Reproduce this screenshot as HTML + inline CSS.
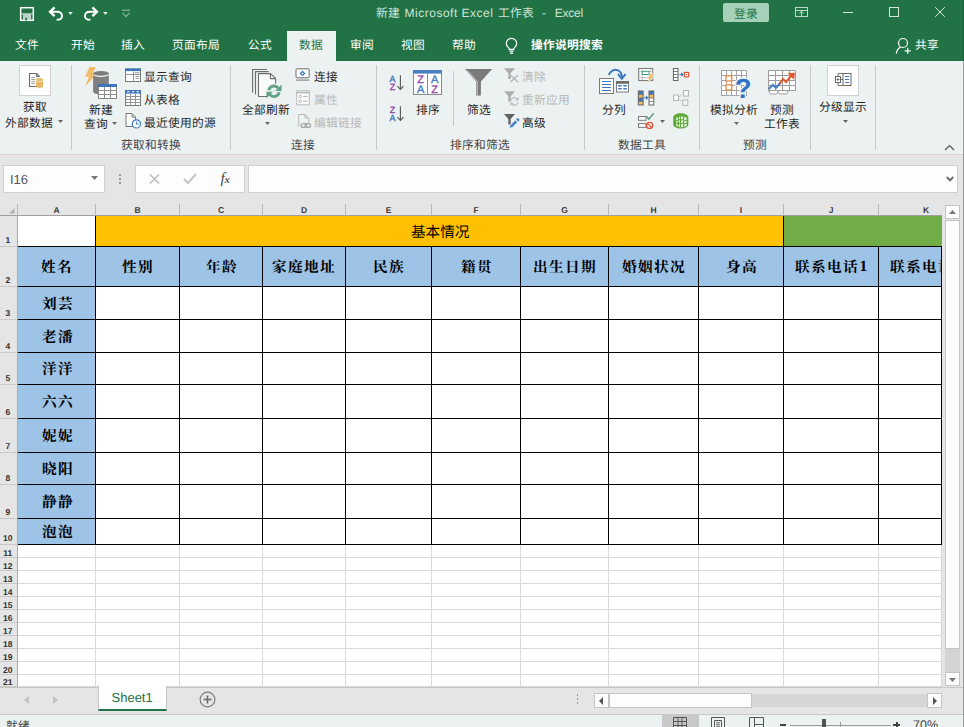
<!DOCTYPE html>
<html lang="zh-CN"><head><meta charset="utf-8"><title>Excel</title>
<style>
html,body{margin:0;padding:0;background:#e6e6e6;width:964px;height:727px;overflow:hidden;}
#app{width:964px;height:727px;position:relative;overflow:hidden;font-family:"Liberation Sans",sans-serif;text-rendering:geometricPrecision;-webkit-font-smoothing:antialiased;}
.a{position:absolute;overflow:visible;}
.t{font-family:"Liberation Sans",sans-serif;white-space:nowrap;}
.g{stroke:none;font-size:1000px;font-family:"Liberation Sans","Noto Sans CJK SC",sans-serif;}
.gb{stroke:none;font-size:1000px;font-weight:bold;font-family:"Liberation Sans","Noto Sans CJK SC",sans-serif;}
.gs{stroke:none;font-size:1000px;font-weight:bold;letter-spacing:67px;font-family:"Liberation Serif","Noto Serif CJK SC",serif;}
</style></head><body><div id="app">
<div class="a" style="left:0px;top:0px;width:964px;height:61px;background:#217346"></div>
<div class="a" style="left:963px;top:0px;width:1px;height:61px;background:#1c6039"></div>
<div class="a" style="left:287px;top:31px;width:49px;height:31px;background:#ecf2f2"></div>
<svg class="a" role="img" aria-label="文件" style="left:15px;top:38.2px;" width="24" height="12" viewBox="0 -880 2000 1000" preserveAspectRatio="none" fill="#fff"><text class="g" x="0" y="0">文件</text></svg>
<svg class="a" role="img" aria-label="开始" style="left:71px;top:38.2px;" width="24" height="12" viewBox="0 -880 2000 1000" preserveAspectRatio="none" fill="#fff"><text class="g" x="0" y="0">开始</text></svg>
<svg class="a" role="img" aria-label="插入" style="left:121px;top:38.2px;" width="24" height="12" viewBox="0 -880 2000 1000" preserveAspectRatio="none" fill="#fff"><text class="g" x="0" y="0">插入</text></svg>
<svg class="a" role="img" aria-label="页面布局" style="left:172px;top:38.2px;" width="48" height="12" viewBox="0 -880 4000 1000" preserveAspectRatio="none" fill="#fff"><text class="g" x="0" y="0">页面布局</text></svg>
<svg class="a" role="img" aria-label="公式" style="left:248px;top:38.2px;" width="24" height="12" viewBox="0 -880 2000 1000" preserveAspectRatio="none" fill="#fff"><text class="g" x="0" y="0">公式</text></svg>
<svg class="a" role="img" aria-label="审阅" style="left:350px;top:38.2px;" width="24" height="12" viewBox="0 -880 2000 1000" preserveAspectRatio="none" fill="#fff"><text class="g" x="0" y="0">审阅</text></svg>
<svg class="a" role="img" aria-label="视图" style="left:401px;top:38.2px;" width="24" height="12" viewBox="0 -880 2000 1000" preserveAspectRatio="none" fill="#fff"><text class="g" x="0" y="0">视图</text></svg>
<svg class="a" role="img" aria-label="帮助" style="left:452px;top:38.2px;" width="24" height="12" viewBox="0 -880 2000 1000" preserveAspectRatio="none" fill="#fff"><text class="g" x="0" y="0">帮助</text></svg>
<svg class="a" role="img" aria-label="数据" style="left:299px;top:38.2px;" width="24" height="12" viewBox="0 -880 2000 1000" preserveAspectRatio="none" fill="#217346"><text class="g" x="0" y="0">数据</text></svg>
<svg class="a" role="img" aria-label="操作说明搜索" style="left:531px;top:38.2px;" width="72" height="12" viewBox="0 -880 6000 1000" preserveAspectRatio="none" fill="#fff"><text class="gb" x="0" y="0">操作说明搜索</text></svg>
<svg class="a" role="img" aria-label="共享" style="left:915px;top:38.2px;" width="24" height="12" viewBox="0 -880 2000 1000" preserveAspectRatio="none" fill="#fff"><text class="g" x="0" y="0">共享</text></svg>
<svg class="a" role="img" aria-label="新建" style="left:376px;top:6.2px;" width="24" height="12" viewBox="0 -880 2000 1000" preserveAspectRatio="none" fill="#cfe3d8"><text class="g" x="0" y="0">新建</text></svg>
<div class="a t" style="left:404.6px;top:6px;font-size:12px;line-height:14px;color:#cfe3d8;letter-spacing:0.5px">Microsoft Excel</div>
<svg class="a" role="img" aria-label="工作表" style="left:497.6px;top:6.2px;" width="36" height="12" viewBox="0 -880 3000 1000" preserveAspectRatio="none" fill="#cfe3d8"><text class="g" x="0" y="0">工作表</text></svg>
<div class="a t" style="left:542px;top:6px;font-size:12px;line-height:14px;color:#cfe3d8;">-</div>
<div class="a t" style="left:554.8px;top:6px;font-size:12px;line-height:14px;color:#cfe3d8;letter-spacing:-0.25px">Excel</div>
<div class="a" style="left:723px;top:3px;width:46px;height:19px;background:#a5d1b9;border-radius:2px"></div>
<svg class="a" role="img" aria-label="登录" style="left:734px;top:6.5px;" width="24" height="12" viewBox="0 -880 2000 1000" preserveAspectRatio="none" fill="#217346"><text class="g" x="0" y="0">登录</text></svg>
<div class="a" style="left:0px;top:61px;width:964px;height:93px;background:#ecf2f2"></div>
<div class="a" style="left:0px;top:154px;width:964px;height:1px;background:#d6d6d6"></div>
<div class="a" style="left:0px;top:155px;width:964px;height:1px;background:#efe6e1"></div>
<div class="a" style="left:71px;top:65px;width:1px;height:85px;background:#c8cbc9"></div>
<div class="a" style="left:230px;top:65px;width:1px;height:85px;background:#c8cbc9"></div>
<div class="a" style="left:376px;top:65px;width:1px;height:85px;background:#c8cbc9"></div>
<div class="a" style="left:584px;top:65px;width:1px;height:85px;background:#c8cbc9"></div>
<div class="a" style="left:699px;top:65px;width:1px;height:85px;background:#c8cbc9"></div>
<div class="a" style="left:810px;top:65px;width:1px;height:85px;background:#c8cbc9"></div>
<div class="a" style="left:875px;top:65px;width:1px;height:85px;background:#c8cbc9"></div>
<div class="a" style="left:453px;top:71px;width:1px;height:55px;background:#c8cbc9"></div>
<div class="a" style="left:19px;top:65px;width:32px;height:31px;background:#fdfdfd;border:1px solid #d2cfd2;box-sizing:border-box"></div>
<svg class="a" role="img" aria-label="获取" style="left:23px;top:100px;" width="24" height="12" viewBox="0 -880 2000 1000" preserveAspectRatio="none" fill="#262626"><text class="g" x="0" y="0">获取</text></svg>
<svg class="a" role="img" aria-label="外部数据" style="left:5px;top:115.5px;" width="48" height="12" viewBox="0 -880 4000 1000" preserveAspectRatio="none" fill="#262626"><text class="g" x="0" y="0">外部数据</text></svg>
<svg class="a" role="img" aria-label="新建" style="left:89px;top:103px;" width="24" height="12" viewBox="0 -880 2000 1000" preserveAspectRatio="none" fill="#262626"><text class="g" x="0" y="0">新建</text></svg>
<svg class="a" role="img" aria-label="查询" style="left:84px;top:117.3px;" width="24" height="12" viewBox="0 -880 2000 1000" preserveAspectRatio="none" fill="#262626"><text class="g" x="0" y="0">查询</text></svg>
<svg class="a" role="img" aria-label="显示查询" style="left:144px;top:69.5px;" width="48" height="12" viewBox="0 -880 4000 1000" preserveAspectRatio="none" fill="#262626"><text class="g" x="0" y="0">显示查询</text></svg>
<svg class="a" role="img" aria-label="从表格" style="left:144px;top:92.6px;" width="36" height="12" viewBox="0 -880 3000 1000" preserveAspectRatio="none" fill="#262626"><text class="g" x="0" y="0">从表格</text></svg>
<svg class="a" role="img" aria-label="最近使用的源" style="left:144px;top:115.5px;" width="72" height="12" viewBox="0 -880 6000 1000" preserveAspectRatio="none" fill="#262626"><text class="g" x="0" y="0">最近使用的源</text></svg>
<svg class="a" role="img" aria-label="获取和转换" style="left:121px;top:138.2px;" width="60" height="12" viewBox="0 -880 5000 1000" preserveAspectRatio="none" fill="#444"><text class="g" x="0" y="0">获取和转换</text></svg>
<svg class="a" role="img" aria-label="全部刷新" style="left:241.5px;top:102.7px;" width="48" height="12" viewBox="0 -880 4000 1000" preserveAspectRatio="none" fill="#262626"><text class="g" x="0" y="0">全部刷新</text></svg>
<svg class="a" role="img" aria-label="连接" style="left:314px;top:69.5px;" width="24" height="12" viewBox="0 -880 2000 1000" preserveAspectRatio="none" fill="#262626"><text class="g" x="0" y="0">连接</text></svg>
<svg class="a" role="img" aria-label="属性" style="left:314px;top:92.6px;" width="24" height="12" viewBox="0 -880 2000 1000" preserveAspectRatio="none" fill="#b8b8b8"><text class="g" x="0" y="0">属性</text></svg>
<svg class="a" role="img" aria-label="编辑链接" style="left:314px;top:115.5px;" width="48" height="12" viewBox="0 -880 4000 1000" preserveAspectRatio="none" fill="#b8b8b8"><text class="g" x="0" y="0">编辑链接</text></svg>
<svg class="a" role="img" aria-label="连接" style="left:291px;top:138.2px;" width="24" height="12" viewBox="0 -880 2000 1000" preserveAspectRatio="none" fill="#444"><text class="g" x="0" y="0">连接</text></svg>
<svg class="a" role="img" aria-label="排序" style="left:416px;top:102.7px;" width="24" height="12" viewBox="0 -880 2000 1000" preserveAspectRatio="none" fill="#262626"><text class="g" x="0" y="0">排序</text></svg>
<svg class="a" role="img" aria-label="筛选" style="left:467px;top:102.7px;" width="24" height="12" viewBox="0 -880 2000 1000" preserveAspectRatio="none" fill="#262626"><text class="g" x="0" y="0">筛选</text></svg>
<svg class="a" role="img" aria-label="清除" style="left:522px;top:69.5px;" width="24" height="12" viewBox="0 -880 2000 1000" preserveAspectRatio="none" fill="#b8b8b8"><text class="g" x="0" y="0">清除</text></svg>
<svg class="a" role="img" aria-label="重新应用" style="left:522px;top:92.6px;" width="48" height="12" viewBox="0 -880 4000 1000" preserveAspectRatio="none" fill="#b8b8b8"><text class="g" x="0" y="0">重新应用</text></svg>
<svg class="a" role="img" aria-label="高级" style="left:522px;top:115.5px;" width="24" height="12" viewBox="0 -880 2000 1000" preserveAspectRatio="none" fill="#262626"><text class="g" x="0" y="0">高级</text></svg>
<svg class="a" role="img" aria-label="排序和筛选" style="left:450px;top:138.2px;" width="60" height="12" viewBox="0 -880 5000 1000" preserveAspectRatio="none" fill="#444"><text class="g" x="0" y="0">排序和筛选</text></svg>
<svg class="a" role="img" aria-label="分列" style="left:602px;top:102.7px;" width="24" height="12" viewBox="0 -880 2000 1000" preserveAspectRatio="none" fill="#262626"><text class="g" x="0" y="0">分列</text></svg>
<svg class="a" role="img" aria-label="数据工具" style="left:618px;top:138.2px;" width="48" height="12" viewBox="0 -880 4000 1000" preserveAspectRatio="none" fill="#444"><text class="g" x="0" y="0">数据工具</text></svg>
<svg class="a" role="img" aria-label="模拟分析" style="left:710px;top:102.7px;" width="48" height="12" viewBox="0 -880 4000 1000" preserveAspectRatio="none" fill="#262626"><text class="g" x="0" y="0">模拟分析</text></svg>
<svg class="a" role="img" aria-label="预测" style="left:770px;top:102.7px;" width="24" height="12" viewBox="0 -880 2000 1000" preserveAspectRatio="none" fill="#262626"><text class="g" x="0" y="0">预测</text></svg>
<svg class="a" role="img" aria-label="工作表" style="left:764px;top:117.3px;" width="36" height="12" viewBox="0 -880 3000 1000" preserveAspectRatio="none" fill="#262626"><text class="g" x="0" y="0">工作表</text></svg>
<svg class="a" role="img" aria-label="预测" style="left:743px;top:138.2px;" width="24" height="12" viewBox="0 -880 2000 1000" preserveAspectRatio="none" fill="#444"><text class="g" x="0" y="0">预测</text></svg>
<div class="a" style="left:827px;top:65px;width:32px;height:31px;background:#fdfdfd;border:1px solid #d2cfd2;box-sizing:border-box"></div>
<svg class="a" role="img" aria-label="分级显示" style="left:819px;top:100px;" width="48" height="12" viewBox="0 -880 4000 1000" preserveAspectRatio="none" fill="#262626"><text class="g" x="0" y="0">分级显示</text></svg>
<svg class="a" style="left:58.3px;top:120px;" width="5" height="3" viewBox="0 0 5 3"><path d="M0 0H5 L2.5 3Z" fill="#666"/></svg>
<svg class="a" style="left:111.7px;top:121.9px;" width="5" height="3" viewBox="0 0 5 3"><path d="M0 0H5 L2.5 3Z" fill="#666"/></svg>
<svg class="a" style="left:265px;top:122px;" width="5" height="3" viewBox="0 0 5 3"><path d="M0 0H5 L2.5 3Z" fill="#666"/></svg>
<svg class="a" style="left:660px;top:119.8px;" width="5" height="3" viewBox="0 0 5 3"><path d="M0 0H5 L2.5 3Z" fill="#666"/></svg>
<svg class="a" style="left:734.1px;top:122px;" width="5" height="3" viewBox="0 0 5 3"><path d="M0 0H5 L2.5 3Z" fill="#666"/></svg>
<svg class="a" style="left:842.9px;top:119.7px;" width="5" height="3" viewBox="0 0 5 3"><path d="M0 0H5 L2.5 3Z" fill="#666"/></svg>
<svg class="a" style="left:944px;top:144px;" width="11" height="7" viewBox="0 0 11 7"><path d="M1 6 L5.5 1.5 L10 6" fill="none" stroke="#555" stroke-width="1.2"/></svg>
<div class="a" style="left:0px;top:156px;width:964px;height:47px;background:#e5e5e5"></div>
<div class="a" style="left:3px;top:165px;width:102px;height:28px;background:#fdfdfd;border:1px solid #d0d0d0;box-sizing:border-box"></div>
<div class="a t" style="left:10px;top:172px;font-size:13px;line-height:16px;color:#555;">I16</div>
<svg class="a" style="left:90.5px;top:175.5px;" width="7" height="4" viewBox="0 0 7 4"><path d="M0 0H7 L3.5 4Z" fill="#777"/></svg>
<div class="a" style="left:119.3px;top:174.3px;width:1.7px;height:1.7px;background:#9c9c9c"></div>
<div class="a" style="left:119.3px;top:178.3px;width:1.7px;height:1.7px;background:#9c9c9c"></div>
<div class="a" style="left:119.3px;top:182.3px;width:1.7px;height:1.7px;background:#9c9c9c"></div>
<div class="a" style="left:135px;top:165px;width:110px;height:28px;background:#fdfdfd;border:1px solid #d0d0d0;box-sizing:border-box"></div>
<svg class="a" style="left:149px;top:174px;" width="11" height="10" viewBox="0 0 11 10"><path d="M1 0.5 L10 9.5 M10 0.5 L1 9.5" stroke="#c0c0c0" stroke-width="1.7" fill="none"/></svg>
<svg class="a" style="left:183px;top:173px;" width="14" height="11" viewBox="0 0 14 11"><path d="M1 6 L5 10 L13 1" stroke="#c6c4c6" stroke-width="2.2" fill="none"/></svg>
<div class="a" style="left:220.6px;top:169.6px;font-family:'Liberation Serif',serif;font-style:italic;font-size:15.5px;line-height:18px;color:#4c4c4c;white-space:nowrap">f<span style="font-size:10.5px;font-weight:bold;margin-left:-0.3px">x</span></div>
<div class="a" style="left:248px;top:165px;width:710px;height:28px;background:#fdfdfd;border:1px solid #d0d0d0;box-sizing:border-box"></div>
<svg class="a" style="left:945.5px;top:175.5px;" width="8" height="6" viewBox="0 0 8 6"><path d="M0.8 1 L4 4.4 L7.2 1" fill="none" stroke="#6a6a6a" stroke-width="1.9"/></svg>
<div class="a" style="left:0px;top:203px;width:964px;height:13px;background:#e5e5e5"></div>
<div class="a" style="left:18px;top:216px;width:924px;height:471px;background:#fff"></div>
<div class="a" style="left:0px;top:216px;width:18px;height:471px;background:#e5e5e5"></div>
<div class="a t" style="left:46.5px;width:20px;text-align:center;top:204.5px;font-size:8.5px;line-height:10px;color:#3a3a3a;font-weight:bold">A</div>
<div class="a t" style="left:127.5px;width:20px;text-align:center;top:204.5px;font-size:8.5px;line-height:10px;color:#3a3a3a;font-weight:bold">B</div>
<div class="a t" style="left:211px;width:20px;text-align:center;top:204.5px;font-size:8.5px;line-height:10px;color:#3a3a3a;font-weight:bold">C</div>
<div class="a t" style="left:294px;width:20px;text-align:center;top:204.5px;font-size:8.5px;line-height:10px;color:#3a3a3a;font-weight:bold">D</div>
<div class="a t" style="left:378.5px;width:20px;text-align:center;top:204.5px;font-size:8.5px;line-height:10px;color:#3a3a3a;font-weight:bold">E</div>
<div class="a t" style="left:466px;width:20px;text-align:center;top:204.5px;font-size:8.5px;line-height:10px;color:#3a3a3a;font-weight:bold">F</div>
<div class="a t" style="left:554.5px;width:20px;text-align:center;top:204.5px;font-size:8.5px;line-height:10px;color:#3a3a3a;font-weight:bold">G</div>
<div class="a t" style="left:643.5px;width:20px;text-align:center;top:204.5px;font-size:8.5px;line-height:10px;color:#3a3a3a;font-weight:bold">H</div>
<div class="a t" style="left:731px;width:20px;text-align:center;top:204.5px;font-size:8.5px;line-height:10px;color:#3a3a3a;font-weight:bold">I</div>
<div class="a t" style="left:821px;width:20px;text-align:center;top:204.5px;font-size:8.5px;line-height:10px;color:#3a3a3a;font-weight:bold">J</div>
<div class="a t" style="left:916px;width:20px;text-align:center;top:204.5px;font-size:8.5px;line-height:10px;color:#3a3a3a;font-weight:bold">K</div>
<div class="a" style="left:17px;top:204px;width:1px;height:12px;background:#b9b9b9"></div>
<div class="a" style="left:95px;top:204px;width:1px;height:12px;background:#b9b9b9"></div>
<div class="a" style="left:179px;top:204px;width:1px;height:12px;background:#b9b9b9"></div>
<div class="a" style="left:262px;top:204px;width:1px;height:12px;background:#b9b9b9"></div>
<div class="a" style="left:345px;top:204px;width:1px;height:12px;background:#b9b9b9"></div>
<div class="a" style="left:431px;top:204px;width:1px;height:12px;background:#b9b9b9"></div>
<div class="a" style="left:520px;top:204px;width:1px;height:12px;background:#b9b9b9"></div>
<div class="a" style="left:608px;top:204px;width:1px;height:12px;background:#b9b9b9"></div>
<div class="a" style="left:698px;top:204px;width:1px;height:12px;background:#b9b9b9"></div>
<div class="a" style="left:783px;top:204px;width:1px;height:12px;background:#b9b9b9"></div>
<div class="a" style="left:878px;top:204px;width:1px;height:12px;background:#b9b9b9"></div>
<div class="a" style="left:0px;top:215px;width:942px;height:1px;background:#9f9f9f"></div>
<svg class="a" style="left:9px;top:208px;" width="5.5" height="5.5" viewBox="0 0 5.5 5.5"><path d="M5.5 0V5.5H0Z" fill="#b2b2b2"/></svg>
<div class="a t" style="left:-1.2px;width:18px;text-align:center;top:234.7px;font-size:8.5px;line-height:10px;color:#303030;font-weight:bold">1</div>
<div class="a" style="left:0px;top:246px;width:18px;height:1px;background:#c9c9c9"></div>
<div class="a t" style="left:-1.2px;width:18px;text-align:center;top:274.7px;font-size:8.5px;line-height:10px;color:#303030;font-weight:bold">2</div>
<div class="a" style="left:0px;top:286px;width:18px;height:1px;background:#c9c9c9"></div>
<div class="a t" style="left:-1.2px;width:18px;text-align:center;top:307.7px;font-size:8.5px;line-height:10px;color:#303030;font-weight:bold">3</div>
<div class="a" style="left:0px;top:319px;width:18px;height:1px;background:#c9c9c9"></div>
<div class="a t" style="left:-1.2px;width:18px;text-align:center;top:340.7px;font-size:8.5px;line-height:10px;color:#303030;font-weight:bold">4</div>
<div class="a" style="left:0px;top:352px;width:18px;height:1px;background:#c9c9c9"></div>
<div class="a t" style="left:-1.2px;width:18px;text-align:center;top:372.7px;font-size:8.5px;line-height:10px;color:#303030;font-weight:bold">5</div>
<div class="a" style="left:0px;top:384px;width:18px;height:1px;background:#c9c9c9"></div>
<div class="a t" style="left:-1.2px;width:18px;text-align:center;top:406.7px;font-size:8.5px;line-height:10px;color:#303030;font-weight:bold">6</div>
<div class="a" style="left:0px;top:418px;width:18px;height:1px;background:#c9c9c9"></div>
<div class="a t" style="left:-1.2px;width:18px;text-align:center;top:440.7px;font-size:8.5px;line-height:10px;color:#303030;font-weight:bold">7</div>
<div class="a" style="left:0px;top:452px;width:18px;height:1px;background:#c9c9c9"></div>
<div class="a t" style="left:-1.2px;width:18px;text-align:center;top:472.7px;font-size:8.5px;line-height:10px;color:#303030;font-weight:bold">8</div>
<div class="a" style="left:0px;top:484px;width:18px;height:1px;background:#c9c9c9"></div>
<div class="a t" style="left:-1.2px;width:18px;text-align:center;top:506.7px;font-size:8.5px;line-height:10px;color:#303030;font-weight:bold">9</div>
<div class="a" style="left:0px;top:518px;width:18px;height:1px;background:#c9c9c9"></div>
<div class="a t" style="left:-1.2px;width:18px;text-align:center;top:532.7px;font-size:8.5px;line-height:10px;color:#303030;font-weight:bold">10</div>
<div class="a" style="left:0px;top:544px;width:18px;height:1px;background:#c9c9c9"></div>
<div class="a t" style="left:-1.2px;width:18px;text-align:center;top:547.8px;font-size:8.5px;line-height:10px;color:#303030;font-weight:bold">11</div>
<div class="a" style="left:0px;top:557px;width:18px;height:1px;background:#c9c9c9"></div>
<div class="a t" style="left:-1.2px;width:18px;text-align:center;top:560.8px;font-size:8.5px;line-height:10px;color:#303030;font-weight:bold">12</div>
<div class="a" style="left:0px;top:570px;width:18px;height:1px;background:#c9c9c9"></div>
<div class="a t" style="left:-1.2px;width:18px;text-align:center;top:573.8px;font-size:8.5px;line-height:10px;color:#303030;font-weight:bold">13</div>
<div class="a" style="left:0px;top:583px;width:18px;height:1px;background:#c9c9c9"></div>
<div class="a t" style="left:-1.2px;width:18px;text-align:center;top:586.8px;font-size:8.5px;line-height:10px;color:#303030;font-weight:bold">14</div>
<div class="a" style="left:0px;top:596px;width:18px;height:1px;background:#c9c9c9"></div>
<div class="a t" style="left:-1.2px;width:18px;text-align:center;top:599.8px;font-size:8.5px;line-height:10px;color:#303030;font-weight:bold">15</div>
<div class="a" style="left:0px;top:609px;width:18px;height:1px;background:#c9c9c9"></div>
<div class="a t" style="left:-1.2px;width:18px;text-align:center;top:612.8px;font-size:8.5px;line-height:10px;color:#303030;font-weight:bold">16</div>
<div class="a" style="left:0px;top:622px;width:18px;height:1px;background:#c9c9c9"></div>
<div class="a t" style="left:-1.2px;width:18px;text-align:center;top:625.8px;font-size:8.5px;line-height:10px;color:#303030;font-weight:bold">17</div>
<div class="a" style="left:0px;top:635px;width:18px;height:1px;background:#c9c9c9"></div>
<div class="a t" style="left:-1.2px;width:18px;text-align:center;top:638.8px;font-size:8.5px;line-height:10px;color:#303030;font-weight:bold">18</div>
<div class="a" style="left:0px;top:648px;width:18px;height:1px;background:#c9c9c9"></div>
<div class="a t" style="left:-1.2px;width:18px;text-align:center;top:651.8px;font-size:8.5px;line-height:10px;color:#303030;font-weight:bold">19</div>
<div class="a" style="left:0px;top:661px;width:18px;height:1px;background:#c9c9c9"></div>
<div class="a t" style="left:-1.2px;width:18px;text-align:center;top:664.8px;font-size:8.5px;line-height:10px;color:#303030;font-weight:bold">20</div>
<div class="a" style="left:0px;top:674px;width:18px;height:1px;background:#c9c9c9"></div>
<div class="a t" style="left:-1.2px;width:18px;text-align:center;top:676.8px;font-size:8.5px;line-height:10px;color:#303030;font-weight:bold">21</div>
<div class="a" style="left:0px;top:686px;width:18px;height:1px;background:#c9c9c9"></div>
<div class="a" style="left:17px;top:216px;width:1px;height:471px;background:#ababab"></div>
<div class="a" style="left:18px;top:557px;width:924px;height:1px;background:#d9d9d9"></div>
<div class="a" style="left:18px;top:570px;width:924px;height:1px;background:#d9d9d9"></div>
<div class="a" style="left:18px;top:583px;width:924px;height:1px;background:#d9d9d9"></div>
<div class="a" style="left:18px;top:596px;width:924px;height:1px;background:#d9d9d9"></div>
<div class="a" style="left:18px;top:609px;width:924px;height:1px;background:#d9d9d9"></div>
<div class="a" style="left:18px;top:622px;width:924px;height:1px;background:#d9d9d9"></div>
<div class="a" style="left:18px;top:635px;width:924px;height:1px;background:#d9d9d9"></div>
<div class="a" style="left:18px;top:648px;width:924px;height:1px;background:#d9d9d9"></div>
<div class="a" style="left:18px;top:661px;width:924px;height:1px;background:#d9d9d9"></div>
<div class="a" style="left:18px;top:674px;width:924px;height:1px;background:#d9d9d9"></div>
<div class="a" style="left:18px;top:686px;width:924px;height:1px;background:#d9d9d9"></div>
<div class="a" style="left:95px;top:545px;width:1px;height:142px;background:#d9d9d9"></div>
<div class="a" style="left:179px;top:545px;width:1px;height:142px;background:#d9d9d9"></div>
<div class="a" style="left:262px;top:545px;width:1px;height:142px;background:#d9d9d9"></div>
<div class="a" style="left:345px;top:545px;width:1px;height:142px;background:#d9d9d9"></div>
<div class="a" style="left:431px;top:545px;width:1px;height:142px;background:#d9d9d9"></div>
<div class="a" style="left:520px;top:545px;width:1px;height:142px;background:#d9d9d9"></div>
<div class="a" style="left:608px;top:545px;width:1px;height:142px;background:#d9d9d9"></div>
<div class="a" style="left:698px;top:545px;width:1px;height:142px;background:#d9d9d9"></div>
<div class="a" style="left:783px;top:545px;width:1px;height:142px;background:#d9d9d9"></div>
<div class="a" style="left:878px;top:545px;width:1px;height:142px;background:#d9d9d9"></div>
<div class="a" style="left:941px;top:545px;width:1px;height:142px;background:#d9d9d9"></div>
<div class="a" style="left:96px;top:216px;width:688px;height:31px;background:#ffc000"></div>
<div class="a" style="left:784px;top:216px;width:158px;height:31px;background:#70ad47"></div>
<div class="a" style="left:18px;top:247px;width:924px;height:40px;background:#9dc3e6"></div>
<div class="a" style="left:18px;top:287px;width:78px;height:258px;background:#9dc3e6"></div>
<div class="a" style="left:18px;top:246px;width:924px;height:1px;background:#000"></div>
<div class="a" style="left:18px;top:286px;width:924px;height:1px;background:#000"></div>
<div class="a" style="left:18px;top:319px;width:924px;height:1px;background:#000"></div>
<div class="a" style="left:18px;top:352px;width:924px;height:1px;background:#000"></div>
<div class="a" style="left:18px;top:384px;width:924px;height:1px;background:#000"></div>
<div class="a" style="left:18px;top:418px;width:924px;height:1px;background:#000"></div>
<div class="a" style="left:18px;top:452px;width:924px;height:1px;background:#000"></div>
<div class="a" style="left:18px;top:484px;width:924px;height:1px;background:#000"></div>
<div class="a" style="left:18px;top:518px;width:924px;height:1px;background:#000"></div>
<div class="a" style="left:18px;top:544px;width:924px;height:1px;background:#000"></div>
<div class="a" style="left:95px;top:216px;width:1px;height:329px;background:#000"></div>
<div class="a" style="left:179px;top:247px;width:1px;height:298px;background:#000"></div>
<div class="a" style="left:262px;top:247px;width:1px;height:298px;background:#000"></div>
<div class="a" style="left:345px;top:247px;width:1px;height:298px;background:#000"></div>
<div class="a" style="left:431px;top:247px;width:1px;height:298px;background:#000"></div>
<div class="a" style="left:520px;top:247px;width:1px;height:298px;background:#000"></div>
<div class="a" style="left:608px;top:247px;width:1px;height:298px;background:#000"></div>
<div class="a" style="left:698px;top:247px;width:1px;height:298px;background:#000"></div>
<div class="a" style="left:783px;top:216px;width:1px;height:329px;background:#000"></div>
<div class="a" style="left:878px;top:247px;width:1px;height:298px;background:#000"></div>
<div class="a" style="left:941px;top:247px;width:1px;height:298px;background:#000"></div>
<svg class="a" role="img" aria-label="基本情况" style="left:410.8px;top:223.5px;" width="58.4" height="14.6" viewBox="0 -880 4000 1000" preserveAspectRatio="none" fill="#000"><text class="g" x="0" y="0">基本情况</text></svg>
<svg class="a" role="img" aria-label="姓名" style="left:41px;top:259px;" width="31.01" height="15" viewBox="0 -880 2067 1000" preserveAspectRatio="none" fill="#000"><text class="gs" x="0" y="0">姓名</text></svg>
<svg class="a" role="img" aria-label="性别" style="left:122px;top:259px;" width="31.01" height="15" viewBox="0 -880 2067 1000" preserveAspectRatio="none" fill="#000"><text class="gs" x="0" y="0">性别</text></svg>
<svg class="a" role="img" aria-label="年龄" style="left:205.5px;top:259px;" width="31.01" height="15" viewBox="0 -880 2067 1000" preserveAspectRatio="none" fill="#000"><text class="gs" x="0" y="0">年龄</text></svg>
<svg class="a" role="img" aria-label="家庭地址" style="left:272.49px;top:259px;" width="63.01" height="15" viewBox="0 -880 4201 1000" preserveAspectRatio="none" fill="#000"><text class="gs" x="0" y="0">家庭地址</text></svg>
<svg class="a" role="img" aria-label="民族" style="left:373px;top:259px;" width="31.01" height="15" viewBox="0 -880 2067 1000" preserveAspectRatio="none" fill="#000"><text class="gs" x="0" y="0">民族</text></svg>
<svg class="a" role="img" aria-label="籍贯" style="left:460.5px;top:259px;" width="31.01" height="15" viewBox="0 -880 2067 1000" preserveAspectRatio="none" fill="#000"><text class="gs" x="0" y="0">籍贯</text></svg>
<svg class="a" role="img" aria-label="出生日期" style="left:532.99px;top:259px;" width="63.01" height="15" viewBox="0 -880 4201 1000" preserveAspectRatio="none" fill="#000"><text class="gs" x="0" y="0">出生日期</text></svg>
<svg class="a" role="img" aria-label="婚姻状况" style="left:621.99px;top:259px;" width="63.01" height="15" viewBox="0 -880 4201 1000" preserveAspectRatio="none" fill="#000"><text class="gs" x="0" y="0">婚姻状况</text></svg>
<svg class="a" role="img" aria-label="身高" style="left:725.5px;top:259px;" width="31.01" height="15" viewBox="0 -880 2067 1000" preserveAspectRatio="none" fill="#000"><text class="gs" x="0" y="0">身高</text></svg>
<svg class="a" role="img" aria-label="刘芸" style="left:41.5px;top:295.7px;" width="31.01" height="15" viewBox="0 -880 2067 1000" preserveAspectRatio="none" fill="#000"><text class="gs" x="0" y="0">刘芸</text></svg>
<svg class="a" role="img" aria-label="老潘" style="left:41.5px;top:328.7px;" width="31.01" height="15" viewBox="0 -880 2067 1000" preserveAspectRatio="none" fill="#000"><text class="gs" x="0" y="0">老潘</text></svg>
<svg class="a" role="img" aria-label="洋洋" style="left:41.5px;top:361.2px;" width="31.01" height="15" viewBox="0 -880 2067 1000" preserveAspectRatio="none" fill="#000"><text class="gs" x="0" y="0">洋洋</text></svg>
<svg class="a" role="img" aria-label="六六" style="left:41.5px;top:394.2px;" width="31.01" height="15" viewBox="0 -880 2067 1000" preserveAspectRatio="none" fill="#000"><text class="gs" x="0" y="0">六六</text></svg>
<svg class="a" role="img" aria-label="妮妮" style="left:41.5px;top:428.2px;" width="31.01" height="15" viewBox="0 -880 2067 1000" preserveAspectRatio="none" fill="#000"><text class="gs" x="0" y="0">妮妮</text></svg>
<svg class="a" role="img" aria-label="晓阳" style="left:41.5px;top:461.2px;" width="31.01" height="15" viewBox="0 -880 2067 1000" preserveAspectRatio="none" fill="#000"><text class="gs" x="0" y="0">晓阳</text></svg>
<svg class="a" role="img" aria-label="静静" style="left:41.5px;top:494.2px;" width="31.01" height="15" viewBox="0 -880 2067 1000" preserveAspectRatio="none" fill="#000"><text class="gs" x="0" y="0">静静</text></svg>
<svg class="a" role="img" aria-label="泡泡" style="left:41.5px;top:524.2px;" width="31.01" height="15" viewBox="0 -880 2067 1000" preserveAspectRatio="none" fill="#000"><text class="gs" x="0" y="0">泡泡</text></svg>
<svg class="a" role="img" aria-label="联系电话" style="left:795.3px;top:259px;" width="63.01" height="15" viewBox="0 -880 4201 1000" preserveAspectRatio="none" fill="#000"><text class="gs" x="0" y="0">联系电话</text></svg>
<div class="a" style="left:859.6px;top:257px;font-size:15.5px;line-height:20px;font-family:'Liberation Serif',serif;font-weight:bold;color:#000">1</div>
<svg class="a" role="img" aria-label="联系电话" style="left:890.3px;top:259px;clip-path:inset(-5px 12.8px -5px -5px);" width="63.01" height="15" viewBox="0 -880 4201 1000" preserveAspectRatio="none" fill="#000"><text class="gs" x="0" y="0">联系电话</text></svg>
<div class="a" style="left:942px;top:203px;width:22px;height:484px;background:#e5e5e5"></div>
<div class="a" style="left:945px;top:205px;width:15px;height:14px;background:#fdfdfd;border:1px solid #c4c4c4;box-sizing:border-box"></div>
<svg class="a" style="left:949px;top:210px;" width="7" height="4" viewBox="0 0 7 4"><path d="M0 4H7 L3.5 0Z" fill="#777"/></svg>
<div class="a" style="left:945px;top:220px;width:15px;height:429px;background:#fdfdfd;border:1px solid #c4c4c4;box-sizing:border-box"></div>
<div class="a" style="left:945px;top:649px;width:15px;height:23px;background:#d3d5d4"></div>
<div class="a" style="left:945px;top:672px;width:15px;height:14px;background:#fdfdfd;border:1px solid #c4c4c4;box-sizing:border-box"></div>
<svg class="a" style="left:949px;top:677.5px;" width="7" height="4" viewBox="0 0 7 4"><path d="M0 0H7 L3.5 4Z" fill="#777"/></svg>
<div class="a" style="left:0px;top:687px;width:964px;height:27px;background:#e5e5e5;border-top:1px solid #c6c6c6;box-sizing:border-box"></div>
<svg class="a" style="left:24px;top:696px;" width="5" height="8" viewBox="0 0 5 8"><path d="M5 0V8L0 4Z" fill="#c3c3c3"/></svg>
<svg class="a" style="left:53px;top:696px;" width="5" height="8" viewBox="0 0 5 8"><path d="M0 0V8L5 4Z" fill="#c3c3c3"/></svg>
<div class="a" style="left:98px;top:686px;width:69px;height:25px;background:#fff;border-left:1px solid #c6c6c6;border-right:1px solid #c6c6c6;border-bottom:2px solid #217346;box-sizing:border-box"></div>
<div class="a t" style="left:111.5px;top:690px;font-size:13px;line-height:16px;color:#217346;">Sheet1</div>
<svg class="a" style="left:199px;top:691px;" width="17" height="17" viewBox="0 0 17 17"><circle cx="8.5" cy="8.5" r="7.4" fill="none" stroke="#7a7a7a" stroke-width="1.1"/><path d="M4.5 8.5H12.5M8.5 4.5V12.5" stroke="#6a6a6a" stroke-width="1.6"/></svg>
<div class="a" style="left:576.8px;top:694px;width:1.7px;height:1.7px;background:#9c9c9c"></div>
<div class="a" style="left:576.8px;top:698px;width:1.7px;height:1.7px;background:#9c9c9c"></div>
<div class="a" style="left:576.8px;top:702px;width:1.7px;height:1.7px;background:#9c9c9c"></div>
<div class="a" style="left:594px;top:693px;width:15px;height:15px;background:#fdfdfd;border:1px solid #c4c4c4;box-sizing:border-box"></div>
<svg class="a" style="left:599px;top:696.5px;" width="4" height="8" viewBox="0 0 4 8"><path d="M4 0V8L0 4Z" fill="#555"/></svg>
<div class="a" style="left:609px;top:693px;width:143px;height:15px;background:#fdfdfd;border:1px solid #c4c4c4;box-sizing:border-box"></div>
<div class="a" style="left:752px;top:694px;width:175px;height:13px;background:#d5d5d5"></div>
<div class="a" style="left:927px;top:693px;width:15px;height:15px;background:#fdfdfd;border:1px solid #c4c4c4;box-sizing:border-box"></div>
<svg class="a" style="left:933px;top:696.5px;" width="4" height="8" viewBox="0 0 4 8"><path d="M0 0V8L4 4Z" fill="#555"/></svg>
<div class="a" style="left:0px;top:714px;width:964px;height:1px;background:#c8c8c8"></div>
<div class="a" style="left:0px;top:715px;width:964px;height:12px;background:#ecf2f2"></div>
<svg class="a" role="img" aria-label="就绪" style="left:6px;top:719px;" width="24" height="12" viewBox="0 -880 2000 1000" preserveAspectRatio="none" fill="#444"><text class="g" x="0" y="0">就绪</text></svg>
<div class="a" style="left:662px;top:715px;width:37px;height:12px;background:#c8c8c8"></div>
<svg class="a" style="left:673px;top:717.2px;" width="14" height="11" viewBox="0 0 14 11"><path d="M0.5 0.5H13.5V11H0.5ZM0.5 4.5H13.5M0.5 8.5H13.5M5 0.5V11M9 0.5V11" fill="none" stroke="#555" stroke-width="1"/></svg>
<svg class="a" style="left:711px;top:717.2px;" width="14" height="11" viewBox="0 0 14 11"><path d="M0.5 0.5H13.5V11H0.5ZM3.5 3.5H10.5V11H3.5ZM5.2 5.8H8.8M5.2 7.8H8.8M5.2 9.8H8.8" fill="none" stroke="#555" stroke-width="1"/></svg>
<svg class="a" style="left:749px;top:717.2px;" width="15" height="11" viewBox="0 0 15 11"><path d="M0.5 0.5H14.5V11H0.5ZM5.5 0.5V7.5H14.5M5.5 7.5V11" fill="none" stroke="#555" stroke-width="1"/></svg>
<div class="a" style="left:780px;top:724.3px;width:6px;height:1.8px;background:#444"></div>
<div class="a" style="left:790px;top:725px;width:101px;height:1px;background:#9a9a9a"></div>
<div class="a" style="left:840px;top:722px;width:1px;height:5px;background:#9a9a9a"></div>
<div class="a" style="left:822px;top:719px;width:4px;height:8px;background:#555"></div>
<div class="a" style="left:893px;top:724.3px;width:7.4px;height:1.8px;background:#444"></div>
<div class="a" style="left:895.8px;top:721.5px;width:1.8px;height:6px;background:#444"></div>
<div class="a t" style="left:913px;top:718.3px;font-size:12.5px;line-height:15px;color:#444;">70%</div>
<div class="a" style="left:963px;top:61px;width:1px;height:666px;background:#9b9b9b"></div>
<svg class="a" style="left:0;top:0" width="964" height="727" viewBox="0 0 964 727"><g fill="none" stroke="#fff" stroke-width="1.5">
<rect x="20.7" y="7.7" width="12.6" height="12.6"/>
</g>
<path d="M21.4 13.3H32.6V14.6H31.1V20.3H23V14.6H21.4Z" fill="#f4f9f6" fill-opacity="0.72"/><path d="M25.2 17.9H27.1V20.4H25.2Z" fill="#217346"/>
<g fill="none" stroke="#fff" stroke-width="1.9" stroke-linejoin="miter">
<path d="M54.6 7.3 L50 11.7 L54.6 16.1" stroke-width="2.3"/><path d="M50.3 11.7 H56.8 C60.2 11.7 62 13.6 62 15.9 C62 18.3 60 19.7 56.6 19.7"/>
<path d="M92.4 7.3 L97 11.7 L92.4 16.1" stroke-width="2.3"/><path d="M96.7 11.7 H90.2 C86.8 11.7 85 13.6 85 15.9 C85 18.3 87 19.7 90.4 19.7"/>
</g>
<path d="M68.2 12H72.8L70.5 14.7Z M103.1 12H107.7L105.4 14.7Z" fill="#fff"/>
<g fill="none" stroke="#8fbaa3" stroke-width="1.1"><path d="M122 10.2H130"/><path d="M122.6 12.8L126 16.6L129.4 12.8"/></g>
<g fill="none" stroke="#d3e6db" stroke-width="1">
<g stroke="#bcd8c9"><rect x="795.5" y="7.5" width="12" height="9"/><path d="M795.5 10.5H807.5"/><path d="M801.5 16.5V11.2M799.3 13.4L801.5 11.2L803.7 13.4"/></g>
<path d="M843 12.5H853"/>
<rect x="889.5" y="7.5" width="9" height="9"/>
<path d="M935.2 7.2L944.8 16.8M944.8 7.2L935.2 16.8"/>
</g>
<g fill="none" stroke="#fff" stroke-width="1.2">
<path d="M509.3 49.4 C509.3 47.4 506.3 46.6 506.3 43.4 C506.3 40.6 508.6 38.4 511.5 38.4 C514.4 38.4 516.7 40.6 516.7 43.4 C516.7 46.6 513.7 47.4 513.7 49.4 Z"/>
<path d="M509.4 51.2H513.6M510 53.2H513"/>
<circle cx="903" cy="43" r="4.5"/><path d="M896.3 53.8 C896.6 50.6 898.3 48.2 900.6 47.1"/><path d="M904.6 50.8H910.8M907.7 47.7V53.9"/>
</g>
<path d="M37 86.5H29.5V73.5H36.6L39.6 76.5" fill="none" stroke="#6e6e6e" stroke-width="1.1"/><path d="M36.6 73.5V76.5H39.6" fill="none" stroke="#6e6e6e" stroke-width="1.1"/>
<path d="M31.3 77.5H35M31.3 79.5H35M31.3 81.5H35M31.3 83.5H35" stroke="#9a9a9a" stroke-width="0.9" fill="none"/>
<path d="M36 79.6V86.3C36 87.3 37.6 88 39.5 88C41.4 88 43 87.3 43 86.3V79.6Z" fill="#e8b964"/><ellipse cx="39.5" cy="79.6" rx="3.5" ry="1.5" fill="#e8b964"/><path d="M36 80.6C36.8 81.7 42.2 81.7 43 80.6" fill="none" stroke="#fbf3e4" stroke-width="0.8"/>
<path d="M89.4 67L95.9 67L92.4 74.3L96.5 74.3L85.2 86.2L89 76.8L85 76.8Z" fill="#f0bc68"/>
<path d="M93.1 73.5V91.4C93.1 93 96.7 94.5 101 94.5C105.3 94.5 108.8 93 108.8 91.4V73.5Z" fill="#808080"/>
<ellipse cx="101" cy="74.6" rx="7.85" ry="2.5" fill="#f4f4f4"/><ellipse cx="101" cy="73.4" rx="7.85" ry="2.4" fill="#7d7d7d"/>
<rect x="98.5" y="84.5" width="18" height="14" fill="#fff" stroke="#868686"/><rect x="98" y="84" width="19" height="3" fill="#3f76b8"/>
<path d="M98.5 90.5H116.5M98.5 94.5H116.5M104.5 87V98.5M110.5 87V98.5" stroke="#8e8e8e" fill="none"/>
<rect x="125.5" y="69" width="15" height="12.5" fill="#fff" stroke="#7a7a7a"/><rect x="125" y="68.5" width="16" height="2.6" fill="#3f74bd"/>
<path d="M133.5 71.5V81.5M125.5 74.5H140.5M135.5 76.5H139M135.5 78.5H139M135 72.8H139.5" stroke="#8a8a8a" fill="none" stroke-width="0.9"/>
<rect x="125.5" y="90.5" width="15" height="15" fill="#fff" stroke="#7a7a7a"/><rect x="125" y="90" width="16" height="3.6" fill="#3f74bd"/>
<path d="M127 91.8H129.5M131.8 91.8H134.3M136.5 91.8H139" stroke="#fff" stroke-width="1"/>
<path d="M125.5 96.5H140.5M125.5 99.5H140.5M125.5 102.5H140.5M130.5 93.5V105.5M135.5 93.5V105.5" stroke="#8a8a8a" fill="none" stroke-width="0.9"/>
<path d="M126 113.5H132L135.5 117V126.5H126Z" fill="#fff" stroke="#7a7a7a"/><path d="M132 113.5V117H135.5" fill="none" stroke="#7a7a7a"/>
<circle cx="136.4" cy="123.9" r="4.1" fill="#fff" stroke="#3c78c3" stroke-width="1.2"/><path d="M136.4 121.6V124H138.6" fill="none" stroke="#3c78c3" stroke-width="1"/>
<g fill="none" stroke="#6e6e6e" stroke-width="1.1">
<path d="M252.6 92.5V69.5H266.8"/><path d="M255.5 94.5V71.6H268.8"/>
<path d="M258.5 73.6H270.4L275.6 78.6V96.5H258.5Z" fill="#fbfbfb"/><path d="M270.4 73.6V78.6H275.6"/>
</g>
<circle cx="274" cy="91.3" r="7.9" fill="#ecf2f2"/>
<g fill="none" stroke="#62a286" stroke-width="2.8"><path d="M268.9 90.3 A5.15 5.15 0 0 1 278.2 88.2"/><path d="M279.1 92.3 A5.15 5.15 0 0 1 269.8 94.4"/></g>
<path d="M281.6 84.4V90.9H275.2Z M266.4 98.2V91.7H272.8Z" fill="#62a286"/>
<rect x="296" y="68.8" width="13.2" height="9" rx="1.2" fill="#fff" stroke="#6a6a6a" stroke-width="1"/><path d="M296.3 80.1H308.9" stroke="#777" stroke-width="1" stroke-linecap="round"/>
<path d="M302.5 70.6L305.3 73.4L302.5 76.2L299.7 73.4Z" fill="#2f74c5"/><circle cx="302.5" cy="73.4" r="1" fill="#fff"/>
<rect x="296.7" y="90.8" width="12.6" height="14" fill="#fbfbfb" stroke="#b9b9b9"/><path d="M296.7 92.6H309.3" stroke="#b9b9b9" stroke-width="1.6"/>
<g stroke="#b9b9b9" fill="none"><circle cx="300.2" cy="96.6" r="1.2"/><circle cx="300.2" cy="101.2" r="1.2"/><path d="M303 96.6H307.5M303 101.2H307.5"/></g>
<path d="M298.7 114.5H305L308.7 118V124" fill="none" stroke="#b9b9b9"/><path d="M298.7 114.5V127" fill="none" stroke="#b9b9b9"/><path d="M305 114.5V118H308.7" fill="none" stroke="#b9b9b9"/>
<g fill="none" stroke="#aaa" stroke-width="1.4"><rect x="301.2" y="123.6" width="5.6" height="3.8" rx="1.9"/><rect x="305" y="123.6" width="5.6" height="3.8" rx="1.9"/></g>
<text x="392.6" y="81.9" font-family="Liberation Sans, sans-serif" font-size="9" fill="#3c78c3" stroke="#3c78c3" stroke-width="0.35" text-anchor="middle">A</text>
<text x="392.6" y="89.9" font-family="Liberation Sans, sans-serif" font-size="9" fill="#8f45a8" stroke="#8f45a8" stroke-width="0.35" text-anchor="middle">Z</text>
<text x="392.6" y="112.7" font-family="Liberation Sans, sans-serif" font-size="9" fill="#8f45a8" stroke="#8f45a8" stroke-width="0.35" text-anchor="middle">Z</text>
<text x="392.6" y="120.8" font-family="Liberation Sans, sans-serif" font-size="9" fill="#3c78c3" stroke="#3c78c3" stroke-width="0.35" text-anchor="middle">A</text>
<g fill="none" stroke="#555" stroke-width="1.1"><path d="M400.4 75.3V89.3M397.4 86.2L400.4 89.4L403.4 86.2"/><path d="M400.4 106.3V120.3M397.4 117.2L400.4 120.4L403.4 117.2"/></g>
<rect x="413.5" y="70.5" width="28" height="24" fill="#fff" stroke="#8a8a8a"/><rect x="413" y="70" width="29" height="3.6" fill="#4a7fc1"/><path d="M427.5 73.5V94.5" stroke="#8a8a8a"/>
<text x="420.6" y="82.7" font-family="Liberation Sans, sans-serif" font-size="11" fill="#8f45a8" stroke="#8f45a8" stroke-width="0.35" text-anchor="middle">Z</text>
<text x="420.6" y="92.7" font-family="Liberation Sans, sans-serif" font-size="11" fill="#3c78c3" stroke="#3c78c3" stroke-width="0.35" text-anchor="middle">A</text>
<text x="434.6" y="82.7" font-family="Liberation Sans, sans-serif" font-size="11" fill="#3c78c3" stroke="#3c78c3" stroke-width="0.35" text-anchor="middle">A</text>
<text x="434.6" y="92.7" font-family="Liberation Sans, sans-serif" font-size="11" fill="#8f45a8" stroke="#8f45a8" stroke-width="0.35" text-anchor="middle">Z</text>
<path d="M465 69H492.2L480.9 81.6V95.6H476.1V81.6Z" fill="#7b7b7b"/><path d="M467.4 70.6L477.2 81.4V95" fill="none" stroke="#f2f2f2" stroke-width="0.7"/>
<path d="M504 68.3H515L510.7 73.3V78.89999999999999H508.3V73.3Z" fill="#adadad"/>
<path d="M510.5 75.2L518 82M518 75.2L510.5 82" stroke="#b3b3b3" stroke-width="1.3" fill="none"/>
<path d="M504 91.2H515L510.7 96.2V101.8H508.3V96.2Z" fill="#adadad"/>
<g fill="none" stroke="#bdbdbd" stroke-width="1.3"><path d="M511 100.4A3.6 3.6 0 0 1 517.4 99"/><path d="M518 102.4A3.6 3.6 0 0 1 511.6 103.8"/></g><path d="M518.6 97V100.4H515.2Z M510.4 106V102.6H513.8Z" fill="#bdbdbd"/>
<path d="M504 114H515L510.7 119V124.6H508.3V119Z" fill="#646464"/>
<path d="M509.2 128.4L510 125.4L515.4 120L517.6 122.2L512.2 127.6Z" fill="#3f7fca" stroke="#ecf2f2" stroke-width="0.8"/><path d="M516.1 119.3L516.9 118.5C517.4 118 518 118 518.5 118.5L519.1 119.1C519.6 119.6 519.6 120.2 519.1 120.7L518.3 121.5Z" fill="#3f7fca"/>
<rect x="599.5" y="78.5" width="14" height="15" fill="#fff" stroke="#7a7a7a"/>
<path d="M602 81.5H611M602 84.5H611M602 87.5H611M602 90.5H611" stroke="#3c78c3" stroke-width="1" fill="none"/>
<rect x="616.5" y="81.5" width="12" height="10.5" fill="#fff" stroke="#7a7a7a"/><rect x="616" y="81" width="13" height="2.8" fill="#6c6c6c"/>
<path d="M618.2 85.7H621.7M623.3 85.7H626.8M618.2 88.8H621.7M623.3 88.8H626.8" stroke="#3c78c3" stroke-width="1.6" fill="none"/>
<path d="M608.8 74.8C610.2 70.8 614.4 68.9 618 70.4C620.6 71.5 621.8 73.8 621.8 77.2" fill="none" stroke="#3c78c3" stroke-width="2"/><path d="M618 74.2L621.8 78.6L625.6 74.2" fill="none" stroke="#3c78c3" stroke-width="2"/>
<rect x="638.7" y="68.5" width="14" height="12" fill="#fff" stroke="#7a7a7a" stroke-width="1.1"/>
<path d="M638.7 71.5H652.7M638.7 77.5H652.7M642 68.5V80.5M650 68.5V72" stroke="#bcbcbc" stroke-width="0.8" fill="none"/>
<rect x="642.3" y="71.3" width="6.8" height="3.2" fill="#fff" stroke="#3f9f7c" stroke-width="1"/>
<path d="M650.4 73.4L654.2 73.4L651.8 77.2L654 77.2L646.8 83.4L649.2 78.8L647.2 78.8Z" fill="#f0bc68" stroke="#ecf2f2" stroke-width="0.5"/>
<rect x="638.3" y="91.0" width="4.8" height="3.5" fill="#3c78c3"/>
<rect x="638.3" y="94.5" width="4.8" height="3.5" fill="#f2bb60"/>
<rect x="638.3" y="98.0" width="4.8" height="3.5" fill="#3c78c3"/>
<rect x="638.3" y="101.5" width="4.8" height="3.5" fill="#f2bb60"/>
<rect x="638.3" y="91" width="4.8" height="14" fill="none" stroke="#666" stroke-width="1"/>
<path d="M638.3 94.5H643.0999999999999M638.3 98H643.0999999999999M638.3 101.5H643.0999999999999" stroke="#666" stroke-width="0.7"/>
<rect x="649" y="91.0" width="4.8" height="3.5" fill="#3c78c3"/>
<rect x="649" y="94.5" width="4.8" height="3.5" fill="#f2bb60"/>
<rect x="649" y="98.0" width="4.8" height="3.5" fill="#fff"/>
<rect x="649" y="101.5" width="4.8" height="3.5" fill="#fff"/>
<rect x="649" y="91" width="4.8" height="14" fill="none" stroke="#666" stroke-width="1"/>
<path d="M649 94.5H653.8M649 98H653.8M649 101.5H653.8" stroke="#666" stroke-width="0.7"/>
<path d="M644.2 97.8H647.4M646 96.2L647.7 97.8L646 99.4" stroke="#3c78c3" stroke-width="1.1" fill="none"/>
<rect x="638.5" y="116.5" width="7.5" height="3.8" fill="#fff" stroke="#7a7a7a"/><rect x="638.5" y="123.6" width="7.5" height="3.8" fill="#fff" stroke="#7a7a7a"/>
<path d="M646.6 116.6L648.9 119.2L653.6 113.4" fill="none" stroke="#4a9d78" stroke-width="1.5"/>
<circle cx="649.6" cy="125.4" r="3" fill="#fff" stroke="#e04e2f" stroke-width="1.3"/><path d="M647.5 123.3L651.7 127.5" stroke="#e04e2f" stroke-width="1.2"/>
<rect x="673.4" y="68.5" width="4.6" height="12" fill="#fff" stroke="#666" stroke-width="1"/><path d="M673.4 71.5H678M673.4 74.5H678M673.4 77.5H678" stroke="#666" stroke-width="0.8"/>
<path d="M679.4 74.5H682.8M681.3 72.9L683 74.5L681.3 76.1" stroke="#3c78c3" stroke-width="1.1" fill="none"/>
<rect x="684.3" y="72.4" width="4.4" height="4.4" fill="#fff" stroke="#d9482b" stroke-width="1.1"/><rect x="685.9" y="74" width="1.2" height="1.2" fill="#d9482b"/>
<g fill="#f8f8f8" stroke="#b5b5b5" stroke-width="1"><rect x="673.5" y="95" width="5" height="5.6"/><rect x="683.6" y="90.5" width="5" height="5.6"/><rect x="682.8" y="100" width="5" height="5.4"/></g>
<path d="M678.5 97.4L683.6 93.4M678.5 98.4L682.8 102.4" stroke="#c4c4c4" stroke-width="0.9" fill="none"/>
<path d="M673.2 117.2C673.2 115 676.6 113.2 680.7 113.2C684.9 113.2 688.3 115 688.3 117.2V124.6C688.3 126.8 684.9 128.6 680.7 128.6C676.6 128.6 673.2 126.8 673.2 124.6Z" fill="#5fa83a"/>
<path d="M676.2 118L680.4 116.2L686.6 117.6L686.6 126L680.6 127.6L676.2 125.8Z" fill="#e9f5e1"/>
<path d="M680.5 116.3V127.5M683.6 117V126.8M676.2 120.6L680.5 119.5L686.6 120.6M676.2 123.4L680.5 123L686.6 123.6M678.3 117.1V126.6" stroke="#5fa83a" stroke-width="1.1" fill="none"/>
<g stroke="#a4a4a4" stroke-width="1" fill="none"><rect x="721.5" y="70.5" width="25" height="25" fill="#fff"/><path d="M721.5 75.5H746.5M721.5 80.5H746.5M721.5 85.5H746.5M721.5 90.5H746.5M726.5 70.5V95.5M731.5 70.5V95.5M736.5 70.5V95.5M741.5 70.5V95.5"/></g>
<rect x="726" y="75.8" width="5.8" height="5.2" fill="#fff" stroke="#e8862e" stroke-width="1.2"/><rect x="726" y="84.8" width="5.8" height="5.2" fill="#fff" stroke="#e8862e" stroke-width="1.2"/>
<text x="743.2" y="98.4" font-family="Liberation Sans, sans-serif" font-weight="bold" font-size="27.5" fill="#ecf2f2" stroke="#ecf2f2" stroke-width="2.6" text-anchor="middle">?</text>
<text x="743.2" y="98.4" font-family="Liberation Sans, sans-serif" font-weight="bold" font-size="27.5" fill="#2f74c5" text-anchor="middle">?</text>
<g stroke="#9c9c9c" stroke-width="1" fill="none"><path d="M768.5 70.5H795.5V90.5H788.5L786.5 94H779.5L778 91.5L776.5 94H770.5L768.5 90.5Z" fill="#fff"/><path d="M768.5 75.5H795.5M768.5 80.5H795.5M768.5 85.5H795.5M768.5 90.5H795.5M775.5 70.5V90.5M782.5 70.5V90.5M789.5 70.5V90.5"/></g>
<path d="M768.8 89.2L772.8 84.8L776 87.8L780.2 83" fill="none" stroke="#3c78c3" stroke-width="2"/>
<path d="M779.6 83.8L783 79L786 82L791.4 75.8" fill="none" stroke="#e05a2e" stroke-width="2.1"/><path d="M787.6 73L794.8 72.8L794.2 80Z" fill="#e05a2e"/>
<g fill="none" stroke="#6a6a6a" stroke-width="1"><path d="M838 76.5V73.5H843M838 82.5V85.5H843" stroke="#7a7a7a"/><rect x="835.5" y="76.5" width="5" height="6" fill="#fff"/><path d="M836.6 79.5H839.4M838 78.1V80.9"/><path d="M840.5 79.5H843"/><rect x="843" y="73.5" width="8" height="12" fill="#fff"/></g>
<path d="M845 76.5H849.2M845 79.5H849.2M845 82.5H849.2" stroke="#3c78c3" stroke-width="1.2" fill="none"/></svg>
</div></body></html>
